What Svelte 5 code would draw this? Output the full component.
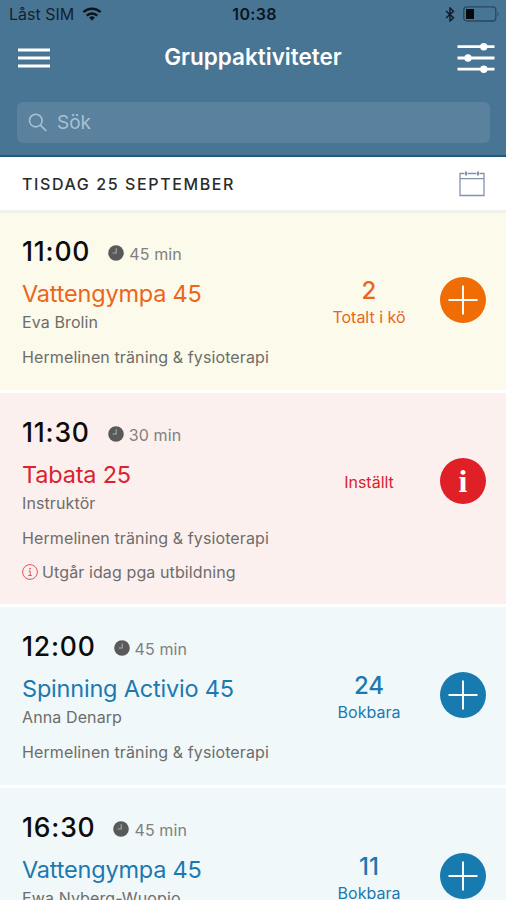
<script>
  const activities = [
    { time: '11:00', length: '45 min', title: 'Vattengympa 45', leader: 'Eva Brolin', place: 'Hermelinen träning & fysioterapi', count: '2', label: 'Totalt i kö', status: 'queue' },
    { time: '11:30', length: '30 min', title: 'Tabata 25', leader: 'Instruktör', place: 'Hermelinen träning & fysioterapi', label: 'Inställt', status: 'cancelled', note: 'Utgår idag pga utbildning' },
    { time: '12:00', length: '45 min', title: 'Spinning Activio 45', leader: 'Anna Denarp', place: 'Hermelinen träning & fysioterapi', count: '24', label: 'Bokbara', status: 'open' },
    { time: '16:30', length: '45 min', title: 'Vattengympa 45', leader: 'Ewa Nyberg-Wuopio', place: 'Hermelinen träning & fysioterapi', count: '11', label: 'Bokbara', status: 'open' }
  ];
</script>

<div class="phone">
  <header>
    <div class="statusbar">
      <div class="carrier">
        <span>Låst SIM</span>
        <svg width="20" height="14" viewBox="0 0 20 14" fill="none" stroke="#0b141b" stroke-width="2.5">
          <path d="M1.4 5.2a12.2 12.2 0 0 1 17.2 0" />
          <path d="M4.7 8.6a7.5 7.5 0 0 1 10.6 0" />
          <path d="M10 13.6 7.1 10.8a4.1 4.1 0 0 1 5.8 0z" fill="#0b141b" stroke="none" />
        </svg>
      </div>
      <span class="clock">10:38</span>
      <div class="power">
        <svg width="10" height="15" viewBox="0 0 10 15" fill="none" stroke="#101a22" stroke-width="1.4">
          <path d="M1 4l7.5 6.8L5 14V1l3.5 3.2L1 11" />
        </svg>
        <svg width="37" height="16" viewBox="0 0 37 16">
          <rect x="0.8" y="0.8" width="32" height="14.2" rx="3" fill="none" stroke="#28485e" stroke-width="1.3" />
          <rect x="3" y="3" width="8" height="10" fill="#05090c" />
          <path d="M34.7 5.7q2 2.3 0 4.6z" fill="#28485e" />
        </svg>
      </div>
    </div>

    <div class="navbar">
      <button aria-label="Meny">
        <svg width="32" height="20" viewBox="0 0 32 20" stroke="#fff" stroke-width="3">
          <path d="M0 2h32M0 10h32M0 18h32" />
        </svg>
      </button>
      <h1>Gruppaktiviteter</h1>
      <button aria-label="Filter">
        <svg width="38" height="30" viewBox="0 0 38 30" stroke="#fff" stroke-width="2.8" fill="#fff">
          <path d="M.5 3.7h37M.5 15h37M.5 26.2h37" />
          <g stroke="none">
            <circle cx="26.8" cy="3.7" r="3.7" />
            <circle cx="11" cy="15" r="3.7" />
            <circle cx="26.8" cy="26.2" r="3.7" />
          </g>
        </svg>
      </button>
    </div>

    <div class="search">
      <svg width="20" height="19" viewBox="0 0 20 19" fill="none" stroke="#a9c1d2" stroke-width="1.6">
        <circle cx="7.8" cy="7.6" r="6.3" />
        <path d="M12.3 12.2l6 5.6" />
      </svg>
      <span>Sök</span>
    </div>
  </header>

  <div class="day">
    <h2>TISDAG 25 SEPTEMBER</h2>
    <svg width="26" height="26" viewBox="0 0 26 26" fill="none" stroke="#7f95ae" stroke-width="1.3">
      <path d="M5.5 2.5H1v22h24v-22h-4.5M8.5 2.5h9M1 7.7h24" />
      <path d="M7 .5v4M19 .5v4" stroke-width="2" />
    </svg>
  </div>

  <ul>
    {#each activities as activity}
      <li class={activity.status}>
        <div class="info">
          <div class="when">
            <strong>{activity.time}</strong>
            <svg width="16" height="16" viewBox="0 0 16 16">
              <circle cx="8" cy="8" r="7.8" fill="#595959" />
              <path d="M8.2 3.2V8H4.6" fill="none" stroke="#aaa" stroke-width="1.1" />
            </svg>
            <span>{activity.length}</span>
          </div>
          <h3>{activity.title}</h3>
          <p>{activity.leader}</p>
          <p class="place">{activity.place}</p>
          {#if activity.note}
            <p class="note">
              <svg width="16" height="16" viewBox="0 0 16 16" fill="none" stroke="#e0545b">
                <circle cx="8" cy="8" r="7.4" />
                <path d="M6.7 7h1.5v4.5M6.4 11.5h3.4" />
                <circle cx="8" cy="4.6" r=".9" fill="#e0545b" stroke="none" />
              </svg>
              {activity.note}
            </p>
          {/if}
        </div>
        <div class="spots">
          {#if activity.count}<b>{activity.count}</b>{/if}
          <span>{activity.label}</span>
        </div>
        {#if activity.status === 'cancelled'}
          <button class="round letter" aria-label="Information">i</button>
        {:else}
          <button class="round" aria-label="Boka">
            <svg width="30" height="30" viewBox="0 0 30 30" stroke="#fff" stroke-width="1.9">
              <path d="M.5 15h29M15 .5v29" />
            </svg>
          </button>
        {/if}
      </li>
    {/each}
  </ul>
</div>

<style>
  :global(body) {
    overflow: hidden;
    background: #fff;
  }
  .phone {
    height: 900px;
    overflow: hidden;
    font-family: Inter, "Liberation Sans", sans-serif;
    color: #6d6d6b;
  }
  h1, h2, h3, p, ul {
    margin: 0;
    padding: 0;
  }
  svg {
    display: block;
    flex: none;
  }
  button {
    padding: 0;
    border: 0;
    background: none;
  }
  header {
    box-sizing: border-box;
    height: 157px;
    background: #487594;
    border-bottom: 2px solid #1d5a7c;
  }
  .statusbar {
    display: grid;
    grid-template-columns: 1fr auto 1fr;
    align-items: center;
    height: 28px;
    padding: 0 6px 0 9px;
    font-size: 16px;
    color: #14222d;
  }
  .carrier {
    display: flex;
    align-items: center;
    gap: 8px;
  }
  .clock {
    font-weight: 600;
    letter-spacing: 0.3px;
    color: #0b141b;
  }
  .power {
    display: flex;
    align-items: center;
    justify-content: flex-end;
    gap: 8px;
  }
  .navbar {
    display: grid;
    grid-template-columns: 1fr auto 1fr;
    align-items: center;
    height: 59px;
    padding: 0 11px 0 18px;
  }
  .navbar button:last-child {
    justify-self: end;
  }
  h1 {
    margin-right: 7px;
    padding-bottom: 3px;
    font-size: 22.5px;
    font-weight: 600;
    color: #fff;
  }
  .search {
    display: flex;
    align-items: center;
    gap: 9px;
    box-sizing: border-box;
    height: 41px;
    margin: 15px 16px 0 17px;
    padding-left: 11px;
    border-radius: 6px;
    background: #5a819d;
    font-size: 19px;
    color: #a9c1d2;
  }
  .day {
    display: flex;
    align-items: center;
    justify-content: space-between;
    box-sizing: border-box;
    height: 56px;
    padding: 1px 21px 0 22px;
    border-bottom: 3px solid #f1f1ee;
  }
  h2 {
    font-size: 16px;
    font-weight: 450;
    letter-spacing: 1.6px;
    color: #2b2b2b;
  }
  ul {
    display: flex;
    flex-direction: column;
    gap: 3px;
    list-style: none;
  }
  li {
    display: flex;
    align-items: flex-start;
    padding: 21px 20px 23px 22px;
  }
  li:first-child {
    padding-top: 20px;
  }
  .info {
    flex: 1;
    white-space: nowrap;
    font-size: 16px;
    line-height: 20px;
    letter-spacing: 0.11px;
  }
  .when {
    display: flex;
    align-items: center;
    height: 36px;
    margin-bottom: 9px;
  }
  .when strong {
    margin-right: 18px;
    font-size: 26.5px;
    font-weight: 500;
    letter-spacing: 0.8px;
    color: #0c0c0c;
  }
  .when svg {
    margin: 4px 5px 0 0;
  }
  .when span {
    margin-top: 6px;
    color: #80807e;
  }
  h3 {
    margin-bottom: 2px;
    font-size: 23.5px;
    font-weight: 400;
    line-height: 32px;
    letter-spacing: -0.2px;
  }
  .place {
    margin-top: 15px;
  }
  .note {
    display: flex;
    align-items: center;
    gap: 4px;
    height: 18px;
    margin-top: 15px;
  }
  .spots {
    display: flex;
    flex-direction: column;
    align-items: center;
    justify-content: center;
    width: 100px;
    height: 54px;
    margin: 43px 21px 0 0;
    font-size: 16px;
    line-height: 24px;
  }
  .spots b {
    font-size: 24px;
    font-weight: 500;
    line-height: 28px;
  }
  .round {
    display: flex;
    align-items: center;
    justify-content: center;
    width: 46px;
    height: 46px;
    margin-top: 44px;
    border-radius: 50%;
  }
  .letter {
    font: bold 32px/46px "Liberation Serif", serif;
    color: #fff;
  }

  /* booking states */
  .queue {
    background: #fcfaea;
  }
  .queue h3, .queue .spots {
    color: #ec651a;
  }
  .queue .round {
    background: #f06c05;
  }
  .cancelled {
    background: #fcf0ef;
  }
  .cancelled h3, .cancelled .spots {
    color: #d9232e;
  }
  .cancelled .spots {
    margin-top: 41px;
  }
  .cancelled .round {
    background: #df2027;
  }
  .open {
    background: #f1f8fa;
  }
  .open h3, .open .spots {
    color: #1c79b0;
  }
  .open .round {
    background: #187bb0;
  }
</style>
